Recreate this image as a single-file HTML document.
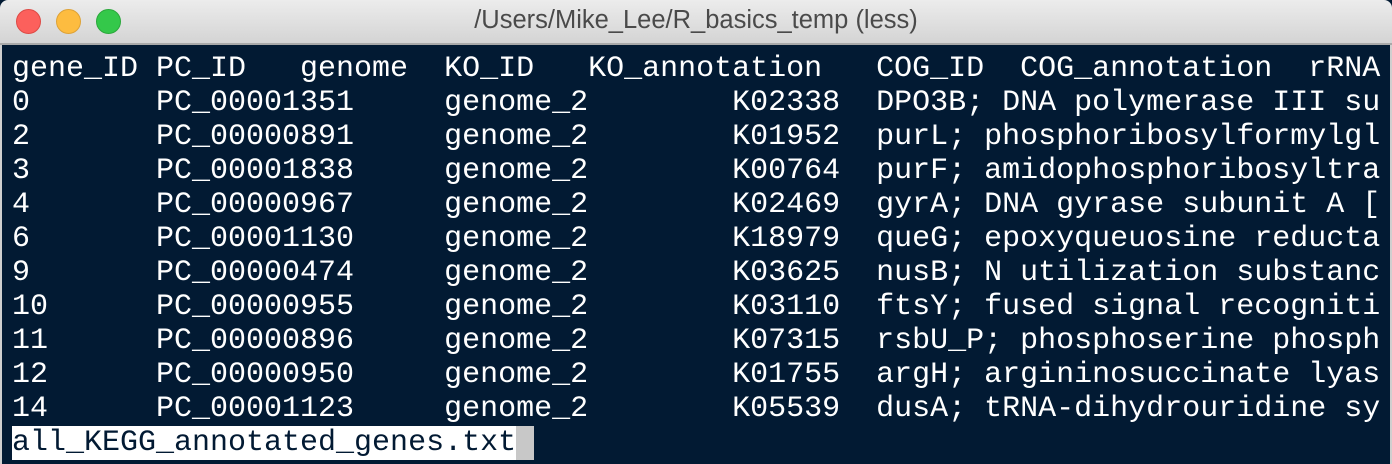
<!DOCTYPE html>
<html><head><style>
html,body{margin:0;padding:0;width:1392px;height:464px;overflow:hidden;background:#fff}
.win{position:absolute;left:0;top:0;width:1392px;height:464px;background:#021a33;}
.tb{position:absolute;left:0;top:0;width:1392px;height:43px;background:linear-gradient(#ececec,#d4d4d4);border-bottom:2px solid #a9a9a9;border-radius:8px 8px 0 0;}
.dot{position:absolute;top:9px;width:23px;height:23px;border-radius:50%}
.t{position:absolute;left:0;right:0;top:6px;text-align:center;font:25.5px "Liberation Sans",sans-serif;color:#4a4a4a}
pre{position:absolute;left:12px;top:52px;margin:0;font:30px/34px "Liberation Mono",monospace;color:#fff;white-space:pre}
.st{background:#fff;color:#021a33}
.cur{background:#c8c8c8}
.side{position:absolute;top:45px;width:2px;height:419px;background:#cfcfcf}
</style></head><body>
<div class="win">
<div class="tb">
<div class="dot" style="left:16px;background:#fc605c;border:1px solid #de4a45"></div>
<div class="dot" style="left:56px;background:#fdbc40;border:1px solid #dea236"></div>
<div class="dot" style="left:96px;background:#34c84a;border:1px solid #2aa83b"></div>
<div class="t">/Users/Mike_Lee/R_basics_temp (less)</div>
</div>
<div class="side" style="left:0"></div><div class="side" style="right:0"></div>
<pre>gene_ID PC_ID   genome  KO_ID   KO_annotation   COG_ID  COG_annotation  rRNA
0       PC_00001351     genome_2        K02338  DPO3B; DNA polymerase III su
2       PC_00000891     genome_2        K01952  purL; phosphoribosylformylgl
3       PC_00001838     genome_2        K00764  purF; amidophosphoribosyltra
4       PC_00000967     genome_2        K02469  gyrA; DNA gyrase subunit A [
6       PC_00001130     genome_2        K18979  queG; epoxyqueuosine reducta
9       PC_00000474     genome_2        K03625  nusB; N utilization substanc
10      PC_00000955     genome_2        K03110  ftsY; fused signal recogniti
11      PC_00000896     genome_2        K07315  rsbU_P; phosphoserine phosph
12      PC_00000950     genome_2        K01755  argH; argininosuccinate lyas
14      PC_00001123     genome_2        K05539  dusA; tRNA-dihydrouridine sy
<span class="st">all_KEGG_annotated_genes.txt</span><span class="cur"> </span></pre>
</div>
</body></html>
